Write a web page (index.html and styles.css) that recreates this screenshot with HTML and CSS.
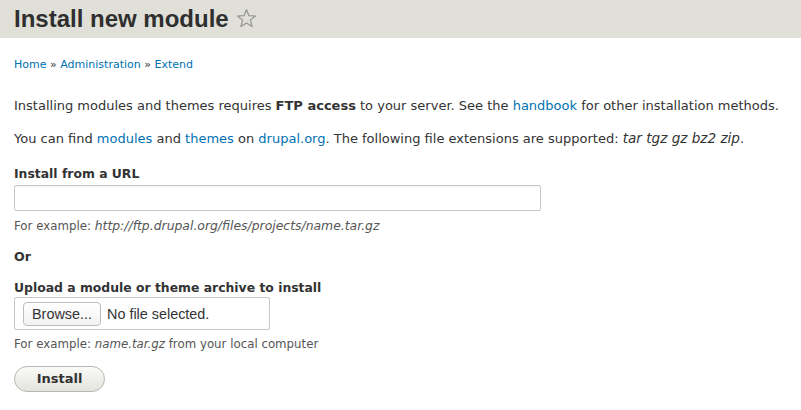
FILE: index.html
```html
<!DOCTYPE html>
<html>
<head>
<meta charset="utf-8">
<link rel="stylesheet" href="styles.css">
</head>
<body>
<div class="header">
  <h1 class="title">Install new module</h1>
  <svg class="star" width="21" height="21" viewBox="0 0 20 20"><path d="M10 1.5 L12.3 7.3 L18.5 7.6 L13.7 11.6 L15.3 17.7 L10 14.3 L4.7 17.7 L6.3 11.6 L1.5 7.6 L7.7 7.3 Z" fill="none" stroke="#94948f" stroke-width="1.1" stroke-linejoin="round"/></svg>
</div>
<div class="content">
  <div class="breadcrumb"><a href="#">Home</a> » <a href="#">Administration</a> » <a href="#">Extend</a></div>
  <p class="para first">Installing modules and themes requires <strong>FTP access</strong> to your server. See the <a href="#">handbook</a> for other installation methods.</p>
  <p class="para second">You can find <a href="#">modules</a> and <a href="#">themes</a> on <a href="#">drupal.org</a>. The following file extensions are supported: <em>tar tgz gz bz2 zip</em>.</p>
  <div class="field url-field">
    <div class="label">Install from a URL</div>
    <div class="text-input"></div>
    <div class="desc">For example: <em>http://ftp.drupal.org/files/projects/name.tar.gz</em></div>
  </div>
  <div class="or">Or</div>
  <div class="field upload-field">
    <div class="label">Upload a module or theme archive to install</div>
    <div class="file-input"><span class="browse">Browse...</span><span class="nofile">No file selected.</span></div>
    <div class="desc">For example: <em>name.tar.gz</em> from your local computer</div>
  </div>
  <div class="actions"><span class="install-btn">Install</span></div>
</div>
</body>
</html>
```
FILE: styles.css
```css
html, body { margin: 0; padding: 0; background: #fff; }
body { font-family: "DejaVu Sans", "Open Sans", sans-serif; color: #333; width: 801px; height: 410px; overflow: hidden; }
a { color: #0071b3; text-decoration: none; }
.header { background: #e0e0d8; height: 38px; display: flex; align-items: center; padding-left: 14px; }
.title { margin: 0; font-family: "Liberation Sans", Arial, sans-serif; font-size: 24px; font-weight: bold; color: #2f2f2f; line-height: 38px; }
.star { margin-left: 7px; margin-top: -1px; }
.content { padding: 0 14px; }
.breadcrumb { font-size: 11px; margin-top: 19px; line-height: 16px; color: #333; }
.para { font-size: 13px; margin: 0; line-height: 16px; }
.para.first { margin-top: 25px; }
.para.second { margin-top: 16px; }
.para.second em { font-size: 13.6px; }
.url-field { margin-top: 19px; }
.upload-field { margin-top: 15px; }
.label { font-weight: bold; font-size: 12.4px; line-height: 16px; }
.text-input { width: 525px; height: 24px; border: 1px solid #c8c8c8; border-radius: 2px; margin-top: 3px; background: #fff; box-shadow: inset 0 1px 1px rgba(0,0,0,0.06); }
.desc { font-size: 11.8px; line-height: 16px; margin-top: 7px; color: #555; }
.url-field .desc em { font-size: 12.4px; }
.or { font-weight: bold; font-size: 12.6px; margin-top: 15px; line-height: 16px; }
.file-input { width: 254px; height: 31px; border: 1px solid #c8c8c8; border-radius: 2px; margin-top: 1px; display: flex; align-items: center; font-family: "Liberation Sans", sans-serif; font-size: 14.4px; color: #333; }
.browse { margin-left: 8px; height: 22px; line-height: 22px; padding: 0 8px; border: 1px solid #bdbdbd; border-radius: 4px; background: linear-gradient(#fff, #f2f2f2); }
.nofile { margin-left: 6px; }
.upload-field .desc { margin-top: 6px; }
.actions { margin-top: 14px; }
.install-btn { display: inline-block; width: 89px; height: 24px; line-height: 24px; text-align: center; border: 1px solid #b8b8b0; border-radius: 13px; background: linear-gradient(#fafaf8, #e4e4de); font-weight: bold; font-size: 13px; color: #333; }
```
